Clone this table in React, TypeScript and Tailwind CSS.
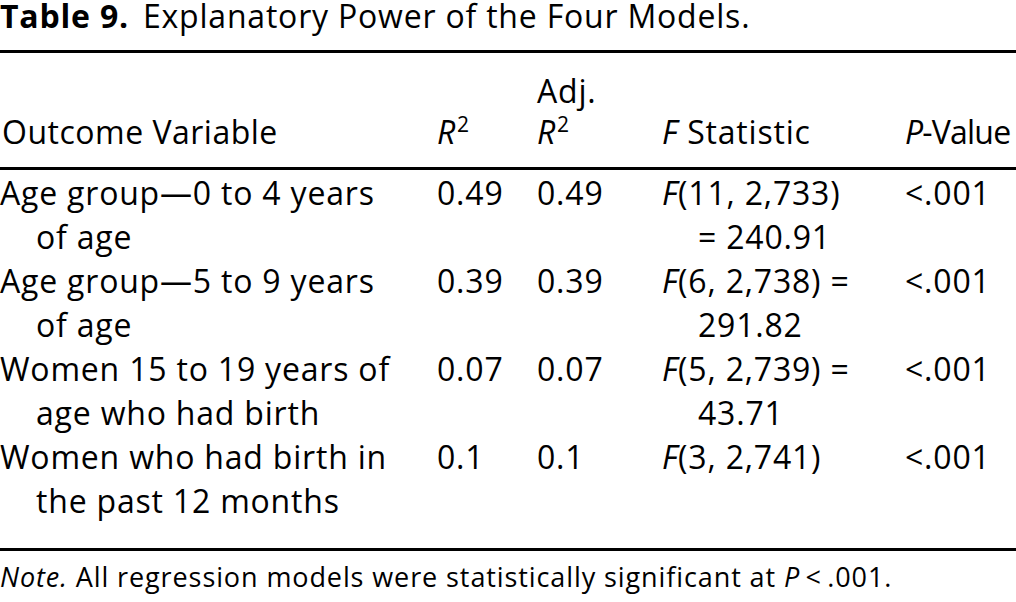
import React from "react";

const rows = [
  {
    a: ["Age group—0 to 4 years", "of age"],
    r2: "0.49",
    adj: "0.49",
    f: [<><i>F</i>(11, 2,733)</>, <>= 240.91</>],
    p: "<.001",
  },
  {
    a: ["Age group—5 to 9 years", "of age"],
    r2: "0.39",
    adj: "0.39",
    f: [<><i>F</i>(6, 2,738) =</>, <>291.82</>],
    p: "<.001",
  },
  {
    a: ["Women 15 to 19 years of", "age who had birth"],
    r2: "0.07",
    adj: "0.07",
    f: [<><i>F</i>(5, 2,739) =</>, <>43.71</>],
    p: "<.001",
  },
  {
    a: ["Women who had birth in", "the past 12 months"],
    r2: "0.1",
    adj: "0.1",
    f: [<><i>F</i>(3, 2,741)</>, null],
    p: "<.001",
  },
];

const grid = "grid grid-cols-[437px_100px_125px_243px_111px]";

function R2() {
  return (
    <span className="whitespace-nowrap">
      <i>R</i>
      <span className="relative top-[-12px] ml-[1px] text-[21px] leading-none">2</span>
    </span>
  );
}

export default function App() {
  return (
    <div
      className="w-[1016px] h-[602px] bg-white text-black overflow-hidden text-[32px] tracking-[0.8px]"
      style={{ fontFamily: "'Open Sans', Lato, sans-serif" }}
    >
      <div className="h-[50px] leading-[32px] whitespace-nowrap">
        <span className="font-bold">Table 9.</span>
        <span className="ml-[14px]">Explanatory Power of the Four Models.</span>
      </div>
      <div className="h-[3px] bg-black" />
      <div className={`${grid} h-[114px] pt-[16px] leading-[41px] items-end pb-[15px]`}>
        <div className="pl-[2px] tracking-[0.5px]">Outcome Variable</div>
        <div>
          <R2 />
        </div>
        <div>
          <div>Adj.</div>
          <div>
            <R2 />
          </div>
        </div>
        <div>
          <i>F</i> Statistic
        </div>
        <div className="whitespace-nowrap tracking-[-0.8px]">
          <i>P</i>-Value
        </div>
      </div>
      <div className="h-[3px] bg-black" />
      <div className="h-[378px] pt-[1px] leading-[44px]">
        {rows.map((r, i) => (
          <div key={i} className={grid}>
            <div className="whitespace-nowrap">
              <div>{r.a[0]}</div>
              <div className="pl-[36px]">{r.a[1]}</div>
            </div>
            <div>{r.r2}</div>
            <div>{r.adj}</div>
            <div className="whitespace-nowrap">
              <div>{r.f[0]}</div>
              <div className="pl-[36px] h-[44px]">{r.f[1]}</div>
            </div>
            <div>{r.p}</div>
          </div>
        ))}
      </div>
      <div className="h-[3px] bg-black" />
      <div className="pt-[4px] leading-[44px] whitespace-nowrap text-[27px] tracking-[0.9px]">
        <i>Note.</i> All regression models were statistically significant at{" "}
        <i>P</i>{"\u2009"}&lt;{"\u2009"}.001.
      </div>
    </div>
  );
}
